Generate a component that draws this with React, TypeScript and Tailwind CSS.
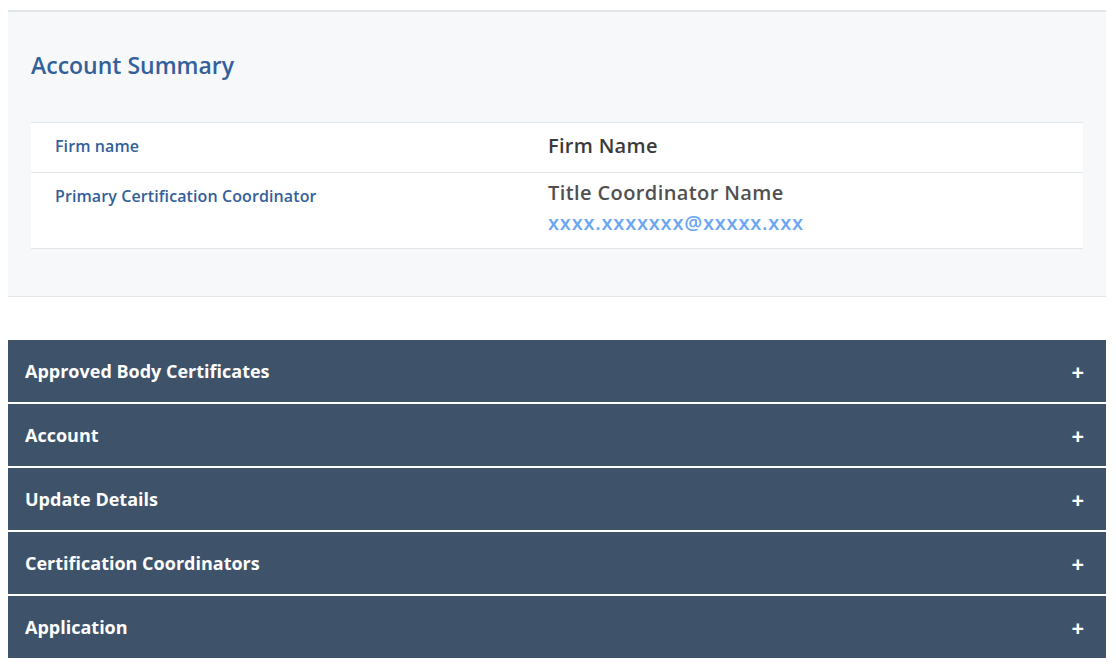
import React from "react";

const sections = [
  "Approved Body Certificates",
  "Account",
  "Update Details",
  "Certification Coordinators",
  "Application",
];

export default function App() {
  return (
    <div
      className="min-h-screen bg-white pl-2 pr-[10px] pt-[10px]"
      style={{ fontFamily: "'Open Sans', 'Noto Sans', sans-serif" }}
    >
      <div className="border-t-2 border-b border-[#e1e6ea] bg-[#f6f8fa] px-[23px] pt-[39px] pb-[47px]">
        <h2 className="text-[23px] font-semibold leading-[28px] text-[#33609a]">
          Account Summary
        </h2>
        <div className="mt-[43px] border-b border-t border-[#e1e6ea] bg-white">
          <div className="flex h-[50px] border-b border-[#e1e6ea]">
            <div className="w-[517px] pl-6 pt-[13px] text-[16px] font-semibold leading-[20px] tracking-[0.1px] text-[#33609a]">
              Firm name
            </div>
            <div className="pt-[11px] text-[20px] font-semibold leading-[24px] tracking-[0.3px] text-[#3a3a3a]">
              Firm Name
            </div>
          </div>
          <div className="flex h-[75px]">
            <div className="w-[517px] pl-6 pt-[13px] text-[16px] font-semibold leading-[20px] tracking-[0.1px] text-[#33609a]">
              Primary Certification Coordinator
            </div>
            <div className="pt-[8px]">
              <div className="text-[20px] font-semibold leading-[24px] tracking-[0.4px] text-[#505050]">
                Title Coordinator Name
              </div>
              <a className="mt-[7px] block text-[20px] font-semibold leading-[22px] tracking-[0.8px] text-[#6aa6f2]">
                xxxx.xxxxxxx@xxxxx.xxx
              </a>
            </div>
          </div>
        </div>
      </div>

      <div className="mt-[43px] flex flex-col gap-[2px]">
        {sections.map((s) => (
          <div
            key={s}
            className="flex h-[62px] items-center justify-between bg-[#3e5269] pl-[17px] pr-[22px]"
          >
            <span className="text-[18px] font-bold text-white">{s}</span>
            <span className="text-[22px] font-bold leading-none text-white">+</span>
          </div>
        ))}
      </div>
    </div>
  );
}
